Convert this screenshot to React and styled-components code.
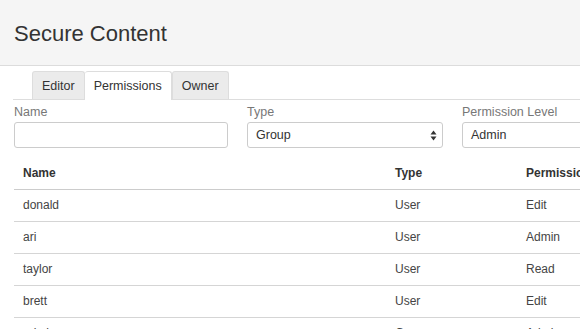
import React from 'react'
import styled, { createGlobalStyle } from 'styled-components'

const rows = [
  { name: 'donald', type: 'User', level: 'Edit' },
  { name: 'ari', type: 'User', level: 'Admin' },
  { name: 'taylor', type: 'User', level: 'Read' },
  { name: 'brett', type: 'User', level: 'Edit' },
  { name: 'admins', type: 'Group', level: 'Admin' },
]

function App() {
  return (
    <>
      <GlobalStyle />
      <Page>
        <Header>
          <Title>Secure Content</Title>
        </Header>
        <Tabs>
          <Tab>Editor</Tab>
          <Tab active>Permissions</Tab>
          <Tab>Owner</Tab>
        </Tabs>
        <Form>
          <Field>
            <Label>Name</Label>
            <Input />
          </Field>
          <Field>
            <Label>Type</Label>
            <Select>
              Group
              <svg width="7" height="11" viewBox="0 0 7 11">
                <path d="M3.5 0.5 L6.5 4.5 L0.5 4.5 Z" fill="#333" />
                <path d="M3.5 10.5 L6.5 6.5 L0.5 6.5 Z" fill="#333" />
              </svg>
            </Select>
          </Field>
          <Field>
            <Label>Permission Level</Label>
            <Select>Admin</Select>
          </Field>
        </Form>
        <Table>
          <thead>
            <tr>
              <Th>Name</Th>
              <Th>Type</Th>
              <Th>Permission Level</Th>
            </tr>
          </thead>
          <tbody>
            {rows.map((r) => (
              <tr key={r.name}>
                <Td>{r.name}</Td>
                <Td>{r.type}</Td>
                <Td>{r.level}</Td>
              </tr>
            ))}
          </tbody>
        </Table>
      </Page>
    </>
  )
}

const GlobalStyle = createGlobalStyle`
    body {
        margin: 0;
        overflow: hidden;
        background: #fff;
        font-family: 'Liberation Sans', Arial, sans-serif;
    }
`

const Page = styled.div`
    width: 680px;
    height: 329px;
    overflow: hidden;
`

const Header = styled.div`
    background: #f5f5f5;
    border-bottom: 1px solid #dcdcdc;
    height: 66px;
    padding-left: 14px;
    display: flex;
    align-items: center;
    box-sizing: border-box;
`

const Title = styled.h1`
    margin: 0;
    margin-top: 2px;
    font-size: 22px;
    font-weight: normal;
    color: #333;
`

const Tabs = styled.div`
    display: flex;
    margin: 5px 0 0 13px;
    padding-left: 19px;
    border-bottom: 1px solid #ddd;
    height: 28px;
`

const Tab = styled.div`
    font-size: 12.5px;
    color: #333;
    padding: 0 9px;
    display: flex;
    align-items: center;
    box-sizing: border-box;
    border: 1px solid #ddd;
    border-left: ${(p) => (p.active ? 'none' : '1px solid #ddd')};
    border-bottom: none;
    border-radius: 3px 3px 0 0;
    background: ${(p) => (p.active ? '#fff' : '#ebebeb')};
    margin-bottom: ${(p) => (p.active ? '-1px' : '0')};
    height: ${(p) => (p.active ? '29px' : '28px')};
    &:first-child {
        border-left: 1px solid #ddd;
    }
`

const Form = styled.div`
    display: grid;
    grid-template-columns: 214px 196px 200px;
    column-gap: 19px;
    padding: 5px 0 0 14px;
`

const Field = styled.div`
    display: flex;
    flex-direction: column;
`

const Label = styled.label`
    font-size: 12.5px;
    color: #777;
    height: 17px;
    line-height: 15px;
`

const Input = styled.div`
    height: 26px;
    box-sizing: border-box;
    border: 1px solid #ccc;
    border-radius: 3px;
    background: #fff;
`

const Select = styled(Input)`
    display: flex;
    align-items: center;
    justify-content: space-between;
    padding: 0 5px 0 8px;
    font-size: 12.5px;
    color: #333;
`

const Table = styled.table`
    border-collapse: collapse;
    margin: 9px 0 0 14px;
    width: 650px;
    table-layout: fixed;
    font-size: 12px;
    color: #444;
    th:nth-child(1), td:nth-child(1) { width: 372px; }
    th:nth-child(2), td:nth-child(2) { width: 131px; }
`

const Th = styled.th`
    text-align: left;
    font-weight: bold;
    color: #333;
    padding: 0 9px;
    height: 32px;
    border-bottom: 1px solid #ccc;
    box-sizing: border-box;
    white-space: nowrap;
`

const Td = styled.td`
    padding: 0 9px;
    height: 32px;
    border-bottom: 1px solid #d5d5d5;
    box-sizing: border-box;
    white-space: nowrap;
`

export default App
